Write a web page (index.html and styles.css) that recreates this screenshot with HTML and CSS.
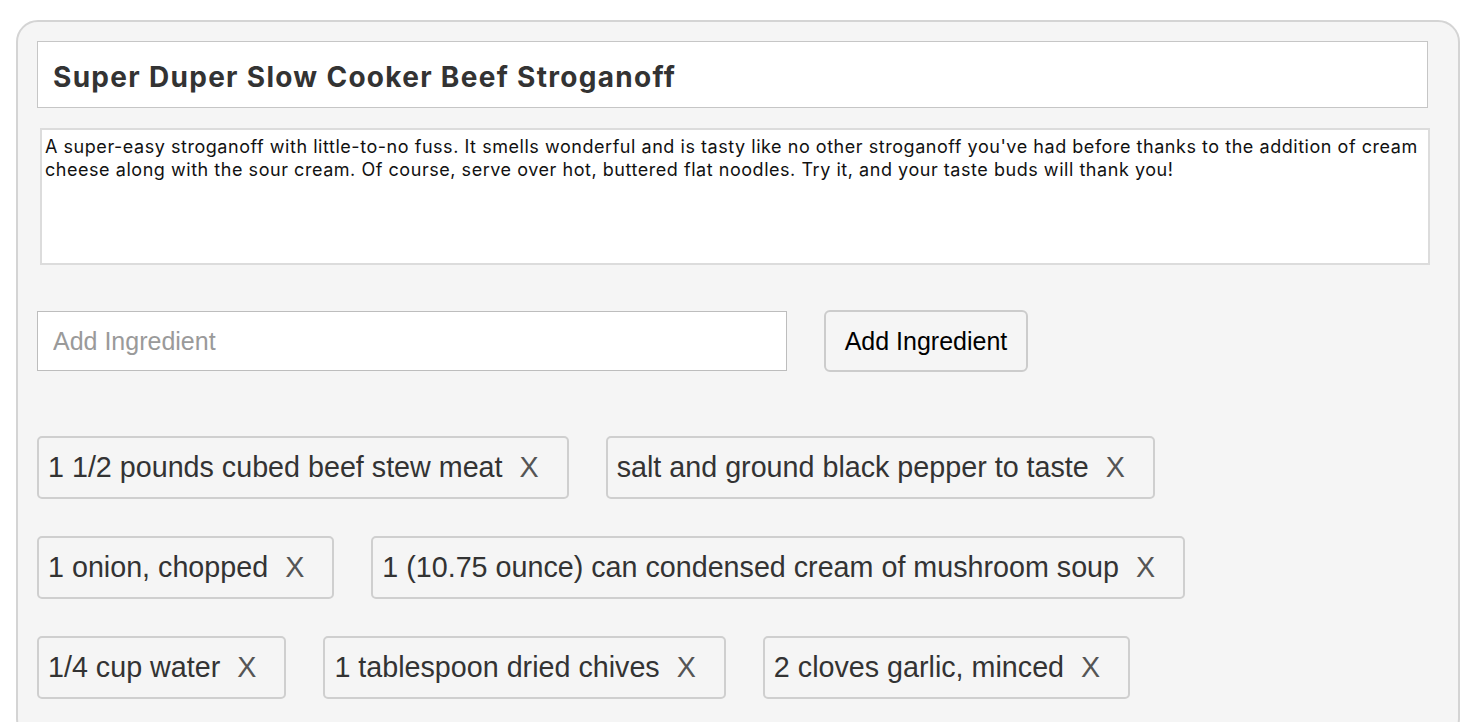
FILE: index.html
```html
<!DOCTYPE html>
<html lang="en">
<head>
<meta charset="utf-8">
<title>Recipe editor</title>
<link rel="stylesheet" href="styles.css">
</head>
<body>
<div class="card">
  <input class="title-input" type="text" value="Super Duper Slow Cooker Beef Stroganoff">
  <textarea class="desc">A super-easy stroganoff with little-to-no fuss. It smells wonderful and is tasty like no other stroganoff you've had before thanks to the addition of cream cheese along with the sour cream. Of course, serve over hot, buttered flat noodles. Try it, and your taste buds will thank you!</textarea>
  <div class="add-row">
    <input class="ing-input" type="text" placeholder="Add Ingredient">
    <button class="add-btn" type="button">Add Ingredient</button>
  </div>
  <div class="tags">
    <div class="tag"><span class="tag-text">1 1/2 pounds cubed beef stew meat</span><span class="tag-x">X</span></div>
    <div class="tag"><span class="tag-text">salt and ground black pepper to taste</span><span class="tag-x">X</span></div>
    <div class="tag"><span class="tag-text">1 onion, chopped</span><span class="tag-x">X</span></div>
    <div class="tag"><span class="tag-text">1 (10.75 ounce) can condensed cream of mushroom soup</span><span class="tag-x">X</span></div>
    <div class="tag"><span class="tag-text">1/4 cup water</span><span class="tag-x">X</span></div>
    <div class="tag"><span class="tag-text">1 tablespoon dried chives</span><span class="tag-x">X</span></div>
    <div class="tag"><span class="tag-text">2 cloves garlic, minced</span><span class="tag-x">X</span></div>
  </div>
</div>
</body>
</html>
```
FILE: styles.css
```css
html, body {
  margin: 0;
  padding: 0;
  background: #ffffff;
}

body {
  font-family: "Liberation Sans", Arial, sans-serif;
}

.card {
  box-sizing: border-box;
  width: 1444px;
  margin: 20px 0 0 16px;
  border: 2px solid #d4d4d4;
  border-radius: 22px;
  background: #f5f5f5;
  padding: 19px 19px 40px;
}

.title-input {
  display: block;
  box-sizing: border-box;
  width: 1391px;
  height: 67px;
  margin: 0;
  border: 1px solid #c6c6c6;
  border-radius: 0;
  background: #ffffff;
  padding: 4px 15px 0;
  font-family: Inter, "Liberation Sans", sans-serif;
  font-weight: 700;
  font-size: 28px;
  letter-spacing: 1.3px;
  color: #333333;
  outline: none;
}

.desc {
  display: block;
  box-sizing: border-box;
  width: 1390px;
  height: 137px;
  margin: 20px 0 0 3px;
  border: 2px solid #dcdcdc;
  border-radius: 0;
  background: #ffffff;
  padding: 5px 3px;
  font-family: Inter, "Liberation Sans", sans-serif;
  font-size: 18px;
  letter-spacing: 0.54px;
  line-height: 23px;
  color: #111111;
  resize: none;
  overflow: hidden;
  outline: none;
}

.add-row {
  display: flex;
  align-items: center;
  margin-top: 45px;
}

.ing-input {
  box-sizing: border-box;
  width: 750px;
  height: 60px;
  margin: 0;
  border: 1px solid #bdbdbd;
  border-radius: 0;
  background: #ffffff;
  padding: 0 15px;
  font-family: "Liberation Sans", Arial, sans-serif;
  font-size: 25px;
  color: #333333;
  outline: none;
}

.ing-input::placeholder {
  color: #9a9a9a;
}

.add-btn {
  box-sizing: border-box;
  width: 204px;
  height: 62px;
  margin: 0 0 0 37px;
  border: 2px solid #cccccc;
  border-radius: 6px;
  background: #f5f5f5;
  padding: 0;
  font-family: "Liberation Sans", Arial, sans-serif;
  font-size: 25px;
  color: #000000;
}

.tags {
  display: flex;
  flex-wrap: wrap;
  gap: 37px;
  margin-top: 64px;
}

.tag {
  box-sizing: border-box;
  display: flex;
  align-items: center;
  height: 63px;
  border: 2px solid #cfcfcf;
  border-radius: 5px;
  padding: 0 28px 0 9px;
  font-family: "Liberation Sans", Arial, sans-serif;
  font-size: 28.7px;
  color: #333333;
  white-space: nowrap;
}

.tag-x {
  margin-left: 17px;
  color: #555555;
}
```
